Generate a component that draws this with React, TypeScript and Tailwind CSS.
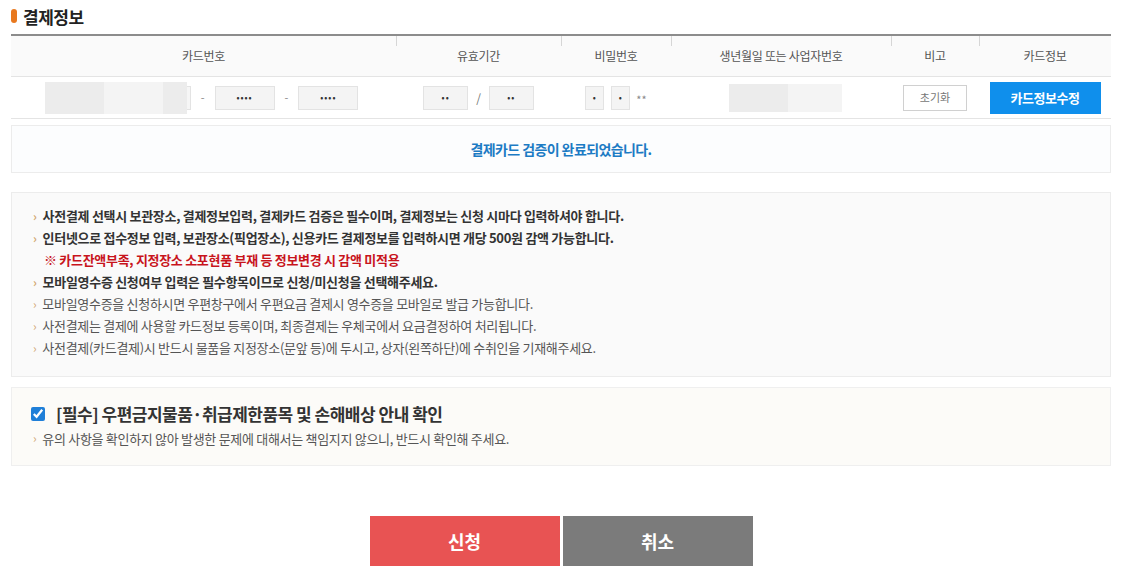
import React from "react";

const font = { fontFamily: '"Noto Sans CJK KR", "Noto Sans", sans-serif' };

const Bullet = () => <span className="mr-[6px] text-[12px] leading-none text-[#d2a771]">›</span>;

const MiniInput = ({ w, value }: { w: string; value: string }) => (
  <div
    className={`${w} flex h-[24px] items-center justify-center border border-[#e3e3e3] bg-[#f4f4f4] text-[9px] leading-none tracking-[1px] text-[#333]`}
  >
    {value}
  </div>
);

const headers = ["카드번호", "유효기간", "비밀번호", "생년월일 또는 사업자번호", "비고", "카드정보"];

const infoLines = [
  { text: "사전결제 선택시 보관장소, 결제정보입력, 결제카드 검증은 필수이며, 결제정보는 신청 시마다 입력하셔야 합니다.", kind: "bold" },
  { text: "인터넷으로 접수정보 입력, 보관장소(픽업장소), 신용카드 결제정보를 입력하시면 개당 500원 감액 가능합니다.", kind: "bold" },
  { text: "※ 카드잔액부족, 지정장소 소포현품 부재 등 정보변경 시 감액 미적용", kind: "red" },
  { text: "모바일영수증 신청여부 입력은 필수항목이므로 신청/미신청을 선택해주세요.", kind: "bold" },
  { text: "모바일영수증을 신청하시면 우편창구에서 우편요금 결제시 영수증을 모바일로 발급 가능합니다.", kind: "normal" },
  { text: "사전결제는 결제에 사용할 카드정보 등록이며, 최종결제는 우체국에서 요금결정하여 처리됩니다.", kind: "normal" },
  { text: "사전결제(카드결제)시 반드시 물품을 지정장소(문앞 등)에 두시고, 상자(왼쪽하단)에 수취인을 기재해주세요.", kind: "normal" },
];

export default function App() {
  return (
    <div className="min-h-[585px] bg-white" style={font}>
      <div className="ml-[11px] w-[1100px]">
        {/* title */}
        <div className="flex h-[34px] items-center gap-[6px] pb-[2px]">
          <span className="h-[14px] w-[6px] rounded-full bg-[#e8781e]" />
          <h2 className="text-[17px] font-bold leading-none tracking-[-0.5px] text-[#222]">결제정보</h2>
        </div>

        {/* table */}
        <div className="border-t-2 border-[#8c8c8c]">
          <div className="grid h-[41px] grid-cols-[385px_165px_110px_220px_88px_132px] border-b border-[#e4e4e4] bg-[#fafafa]">
            {headers.map((h, i) => (
              <div key={h} className="relative flex items-center justify-center text-[12px] tracking-[-0.3px] text-[#555]">
                {i > 0 && <span className="absolute left-0 top-0 h-[10px] w-px bg-[#d6d6d6]" />}
                {h}
              </div>
            ))}
          </div>
          <div className="grid h-[42px] grid-cols-[385px_165px_110px_220px_88px_132px] border-b border-[#e4e4e4]">
            <div className="flex items-center justify-center pr-[4px]">
              <div className="flex h-[32px] items-center">
                <div className="h-[32px] w-[59px] bg-[#ececec]" />
                <div className="h-[32px] w-[59px] bg-[#f4f4f4]" />
                <div className="h-[32px] w-[24px] bg-[#ececec]" />
                <div className="h-[24px] w-[4px] border border-l-0 border-[#e3e3e3] bg-[#f6f6f6]" />
              </div>
              <span className="mx-[10px] text-[11px] text-[#888]">-</span>
              <MiniInput w="w-[60px]" value="••••" />
              <span className="mx-[10px] text-[11px] text-[#888]">-</span>
              <MiniInput w="w-[60px]" value="••••" />
            </div>
            <div className="flex items-center justify-center">
              <MiniInput w="w-[45px]" value="••" />
              <span className="mx-[8px] text-[12px] text-[#777]">/</span>
              <MiniInput w="w-[45px]" value="••" />
            </div>
            <div className="flex items-center justify-center">
              <MiniInput w="w-[19px]" value="•" />
              <span className="w-[7px]" />
              <MiniInput w="w-[19px]" value="•" />
              <span className="ml-[6px] pt-[4px] text-[11px] text-[#888]">**</span>
            </div>
            <div className="flex items-center justify-center pl-[8px]">
              <div className="h-[28px] w-[59px] bg-[#ececec]" />
              <div className="h-[28px] w-[54px] bg-[#f4f4f4]" />
            </div>
            <div className="flex items-center justify-center">
              <button className="h-[26px] w-[64px] border border-[#d0d0d0] bg-white text-[11px] text-[#777]">초기화</button>
            </div>
            <div className="flex items-center justify-center">
              <button className="h-[32px] w-[111px] bg-[#0f8fec] text-[13px] font-bold tracking-[-0.5px] text-white">
                카드정보수정
              </button>
            </div>
          </div>
        </div>

        {/* verification */}
        <div className="mt-[6px] flex h-[48px] items-center justify-center border border-[#ececec] bg-[#fcfdfe]">
          <p className="text-[14px] font-bold tracking-[-0.6px] text-[#1c7bc4]">결제카드 검증이 완료되었습니다.</p>
        </div>

        {/* notices */}
        <div className="mt-[19px] border border-[#ececec] bg-[#fafafa] px-[21px] pb-[17px] pt-[12px]">
          {infoLines.map((l) => (
            <p
              key={l.text}
              className={`flex h-[22px] items-center text-[13px] tracking-[-0.3px] ${
                l.kind === "bold"
                  ? "font-bold text-[#333]"
                  : l.kind === "red"
                  ? "pl-[11px] font-bold text-[#c8141c]"
                  : "text-[#555]"
              }`}
            >
              {l.kind !== "red" && <Bullet />}
              {l.text}
            </p>
          ))}
        </div>

        {/* agreement */}
        <div className="mt-[10px] border border-[#efefef] bg-[#fcfbf8] px-[19px] pb-[17px] pt-[13px]">
          <label className="flex items-center gap-[11px]">
            <input type="checkbox" defaultChecked className="h-[14px] w-[14px] accent-[#1f7fd8]" />
            <span className="text-[17px] font-bold tracking-[-0.5px] text-[#333]">
              [필수] 우편금지물품·취급제한품목 및 손해배상 안내 확인
            </span>
          </label>
          <p className="mt-[2px] flex items-center pl-[2px] text-[13px] tracking-[-0.3px] text-[#555]">
            <Bullet />
            유의 사항을 확인하지 않아 발생한 문제에 대해서는 책임지지 않으니, 반드시 확인해 주세요.
          </p>
        </div>

        {/* buttons */}
        <div className="mt-[50px] flex justify-center gap-[3px]">
          <button className="h-[50px] w-[190px] bg-[#e85353] text-[18px] font-bold text-white">신청</button>
          <button className="h-[50px] w-[190px] bg-[#7b7b7b] text-[18px] font-bold text-white">취소</button>
        </div>
      </div>
    </div>
  );
}
